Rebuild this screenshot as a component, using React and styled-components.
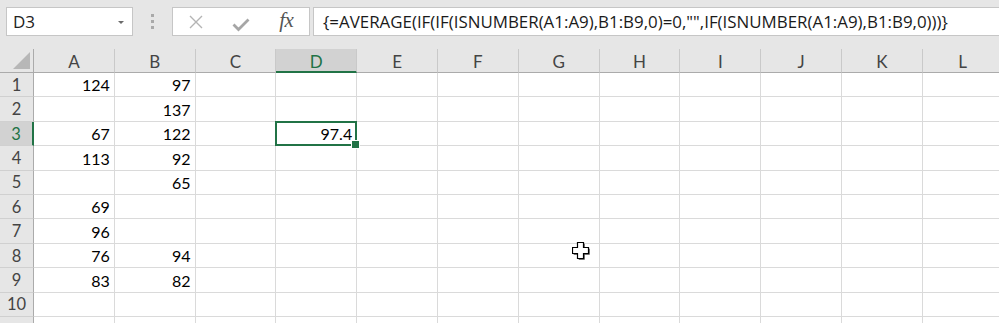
import React from 'react';
import styled, { createGlobalStyle, css } from 'styled-components';

const GREEN = '#217346';
const HEADER_BG = '#e6e6e6';

const Global = createGlobalStyle`
  html, body { margin: 0; padding: 0; background: ${HEADER_BG}; overflow: hidden; }
  * { box-sizing: border-box; }
`;

const Window = styled.div`
  position: relative;
  width: 999px;
  height: 323px;
  overflow: hidden;
  background: ${HEADER_BG};
  display: flex;
  flex-direction: column;
`;

const Toolbar = styled.div`
  flex: none;
  height: 49px;
  display: flex;
  align-items: flex-start;
  padding: 7px 0 0 6px;
`;

const NameBox = styled.div`
  flex: none;
  width: 127px;
  height: 29px;
  background: #fff;
  border: 1px solid #c6c6c6;
  display: flex;
  align-items: center;
  justify-content: space-between;
  padding: 0 8px 0 6px;
  font-family: "Open Sans", sans-serif;
  font-size: 17px;
  color: #222;
`;

const DropArrow = styled.span`
  width: 0;
  height: 0;
  border-left: 3px solid transparent;
  border-right: 3px solid transparent;
  border-top: 3px solid #6b6b6b;
  margin-top: 1px;
`;

const Grip = styled.div`
  flex: none;
  width: 39px;
  height: 29px;
  display: flex;
  flex-direction: column;
  align-items: center;
  justify-content: center;
  gap: 3.5px;
`;

const GripDot = styled.span`
  width: 2.5px;
  height: 2.5px;
  background: #a9a9a9;
`;

const FxBox = styled.div`
  flex: none;
  width: 138px;
  height: 29px;
  background: #fff;
  border: 1px solid #c6c6c6;
  display: grid;
  grid-template-columns: repeat(3, 1fr);
  align-items: center;
  justify-items: center;
`;

const FxLabel = styled.span`
  font-family: "Liberation Serif", serif;
  font-style: italic;
  font-size: 21px;
  color: #555;
  letter-spacing: -0.5px;
  margin-top: -2px;
`;

const FormulaInput = styled.div`
  flex: 1;
  height: 29px;
  margin-left: 3px;
  background: #fff;
  border: 1px solid #c6c6c6;
  border-right: none;
  display: flex;
  align-items: center;
  padding-left: 9px;
  font-family: "Open Sans", sans-serif;
  font-size: 16.9px;
  color: #1a1a1a;
  white-space: nowrap;
  overflow: hidden;
`;

const Sheet = styled.div`
  flex: none;
  display: grid;
  grid-template-columns: 34px repeat(12, 80.8px);
  grid-template-rows: 24px repeat(11, 24.4px);
  background: #fff;
`;

const Corner = styled.div`
  background: ${HEADER_BG};
  border-right: 1px solid #ababab;
  border-bottom: 1px solid #ababab;
  display: flex;
  align-items: flex-end;
  justify-content: flex-end;
  padding: 0 2px 2px 0;
`;

const ColHeader = styled.div`
  background: ${HEADER_BG};
  border-right: 1px solid #c9c9c9;
  border-bottom: 1px solid #ababab;
  display: flex;
  align-items: flex-end;
  justify-content: center;
  padding-bottom: 2px;
  font-family: "Lato", sans-serif;
  font-size: 17px;
  line-height: 1;
  color: #444;
  ${(p) =>
    p.$active &&
    css`
      background: #d2d2d2;
      color: ${GREEN};
      border-bottom: 2px solid ${GREEN};
      padding-bottom: 1px;
    `}
`;

const RowHeader = styled.div`
  background: ${HEADER_BG};
  border-right: 1px solid #ababab;
  border-bottom: 1px solid #d0d0d0;
  display: flex;
  align-items: flex-end;
  justify-content: center;
  padding-bottom: 3px;
  font-family: "Lato", sans-serif;
  font-size: 16.5px;
  line-height: 1;
  color: #444;
  ${(p) =>
    p.$active &&
    css`
      background: #d2d2d2;
      color: ${GREEN};
      border-right: 2px solid ${GREEN};
    `}
`;

const Cell = styled.div`
  position: relative;
  border-right: 1px solid #dadada;
  border-bottom: 1px solid #dadada;
  display: flex;
  align-items: flex-end;
  justify-content: flex-end;
  padding: 0 4px 3px 0;
  font-family: "Lato", sans-serif;
  font-size: 16px;
  line-height: 1;
  color: #000;
  ${(p) =>
    p.$selected &&
    css`
      z-index: 2;
      &::after {
        content: '';
        position: absolute;
        left: -1px;
        top: -1px;
        right: -1px;
        bottom: -1px;
        border: 2px solid ${GREEN};
        pointer-events: none;
      }
      &::before {
        content: '';
        position: absolute;
        right: -4px;
        bottom: -4px;
        width: 7px;
        height: 7px;
        background: ${GREEN};
        border: 1px solid #fff;
        z-index: 3;
      }
    `}
`;

const Cursor = styled.svg`
  position: absolute;
  left: 572px;
  top: 242px;
  width: 19px;
  height: 19px;
  pointer-events: none;
`;

const COLS = ['A', 'B', 'C', 'D', 'E', 'F', 'G', 'H', 'I', 'J', 'K', 'L'];

const DATA = {
  1: { A: '124', B: '97' },
  2: { B: '137' },
  3: { A: '67', B: '122', D: '97.4' },
  4: { A: '113', B: '92' },
  5: { B: '65' },
  6: { A: '69' },
  7: { A: '96' },
  8: { A: '76', B: '94' },
  9: { A: '83', B: '82' },
  10: {},
  11: {},
};

const FORMULA =
  '{=AVERAGE(IF(IF(ISNUMBER(A1:A9),B1:B9,0)=0,"",IF(ISNUMBER(A1:A9),B1:B9,0)))}';

const plus =
  '5.5,0.5 11.5,0.5 11.5,5.5 16.5,5.5 16.5,11.5 11.5,11.5 11.5,16.5 5.5,16.5 5.5,11.5 0.5,11.5 0.5,5.5 5.5,5.5';

export default function App() {
  return (
    <>
      <Global />
      <Window>
        <Toolbar>
          <NameBox>
            <span>D3</span>
            <DropArrow />
          </NameBox>
          <Grip>
            <GripDot />
            <GripDot />
            <GripDot />
          </Grip>
          <FxBox>
            <svg width="16" height="14" viewBox="0 0 16 14">
              <path d="M2 1 L14 13 M14 1 L2 13" stroke="#b4b4b4" strokeWidth="1.4" fill="none" />
            </svg>
            <svg width="18" height="14" viewBox="0 0 18 14" style={{ marginTop: 6 }}>
              <path d="M1.5 6.5 L6.5 11.5 L16.5 1.5" stroke="#a6a6a6" strokeWidth="2.8" fill="none" />
            </svg>
            <FxLabel>fx</FxLabel>
          </FxBox>
          <FormulaInput>{FORMULA}</FormulaInput>
        </Toolbar>
        <Sheet>
          <Corner>
            <svg width="18" height="18" viewBox="0 0 18 18">
              <polygon points="17,0 17,17 0,17" fill="#b7b7b7" />
            </svg>
          </Corner>
          {COLS.map((c) => (
            <ColHeader key={c} $active={c === 'D'}>
              {c}
            </ColHeader>
          ))}
          {Object.keys(DATA).map((r) => (
            <React.Fragment key={r}>
              <RowHeader $active={r === '3'}>{r === '11' ? '' : r}</RowHeader>
              {COLS.map((c) => (
                <Cell key={c} $selected={r === '3' && c === 'D'}>
                  {DATA[r][c] || ''}
                </Cell>
              ))}
            </React.Fragment>
          ))}
        </Sheet>
        <Cursor viewBox="0 0 19 19">
          <polygon points={plus} fill="#444" transform="translate(1.2,1.2)" />
          <polygon points={plus} fill="#fff" stroke="#000" strokeWidth="1.2" />
        </Cursor>
      </Window>
    </>
  );
}
